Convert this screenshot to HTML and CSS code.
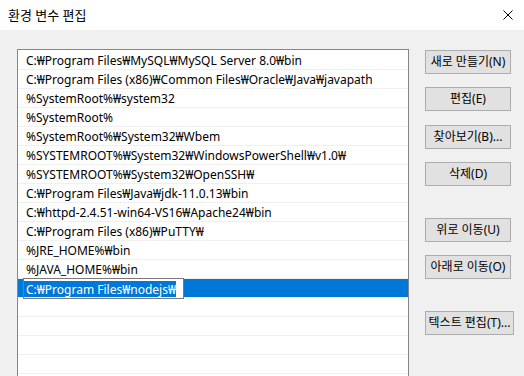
FILE: index.html
```html
<!DOCTYPE html>
<html lang="ko">
<head>
    <meta charset="UTF-8">
    <title>환경 변수 편집</title>
    <link rel="stylesheet" href="styles.css">
</head>
<body>
    <div class="dialog">
        <div class="title-bar">
            <span class="title">환경 변수 편집</span>
            <svg class="close" width="10" height="10" viewBox="0 0 10 10">
                <path d="M0.5 0.5 L9.5 9.5 M9.5 0.5 L0.5 9.5" stroke="#000" stroke-width="1" fill="none"/>
            </svg>
        </div>

        <div class="content">
            <ul class="path-list">
                <li>C:₩Program Files₩MySQL₩MySQL Server 8.0₩bin</li>
                <li>C:₩Program Files (x86)₩Common Files₩Oracle₩Java₩javapath</li>
                <li>%SystemRoot%₩system32</li>
                <li>%SystemRoot%</li>
                <li>%SystemRoot%₩System32₩Wbem</li>
                <li>%SYSTEMROOT%₩System32₩WindowsPowerShell₩v1.0₩</li>
                <li>%SYSTEMROOT%₩System32₩OpenSSH₩</li>
                <li>C:₩Program Files₩Java₩jdk-11.0.13₩bin</li>
                <li>C:₩httpd-2.4.51-win64-VS16₩Apache24₩bin</li>
                <li>C:₩Program Files (x86)₩PuTTY₩</li>
                <li>%JRE_HOME%₩bin</li>
                <li>%JAVA_HOME%₩bin</li>
                <li class="selected">
                    <div class="edit-box"><span class="highlight">C:₩Program Files₩nodejs₩</span></div>
                </li>
                <li></li>
                <li></li>
                <li></li>
                <li></li>
            </ul>

            <div class="buttons">
                <button>새로 만들기(N)</button>
                <button>편집(E)</button>
                <button class="nudge">찾아보기(B)...</button>
                <button>삭제(D)</button>
                <button class="spaced">위로 이동(U)</button>
                <button>아래로 이동(O)</button>
                <button class="spaced wide">텍스트 편집(T)...</button>
            </div>
        </div>
    </div>
</body>
</html>
```

FILE: styles.css
```css
body {
    margin: 0;
    width: 524px;
    height: 376px;
    overflow: hidden;
    font-family: "Noto Sans", "Noto Sans CJK KR", sans-serif;
    font-size: 12px;
    color: #000;
    background: #f0f0f0;
}
.dialog {
    display: flex;
    flex-direction: column;
    height: 376px;
    overflow: hidden;
}
.title-bar {
    flex-shrink: 0;
    height: 30px;
    background: #fff;
    display: flex;
    align-items: center;
    justify-content: space-between;
    padding: 0 11px 1px 8px;
    box-sizing: border-box;
}
.title {
    font-size: 13px;
    line-height: 16px;
}
.close {
    display: block;
}
.content {
    flex: 1;
    min-height: 0;
    overflow: hidden;
    display: flex;
    gap: 16px;
    padding: 19px 0 0 17px;
}
.path-list {
    flex-shrink: 0;
    list-style: none;
    margin: 0;
    padding: 1px 0 0 0;
    width: 390px;
    height: 340px;
    background: #fff;
    border: 1px solid #828790;
}
.path-list li {
    height: 18px;
    line-height: 19px;
    padding: 0 0 0 8px;
    border-bottom: 1px solid #f0f0f0;
    white-space: nowrap;
    position: relative;
}
.path-list li.selected {
    background: #0078d7;
}
.edit-box {
    position: absolute;
    left: 5px;
    top: -1px;
    width: 159px;
    height: 18px;
    border: 1px solid #7a7a7a;
    background: #fff;
    padding: 1px 0 0 0;
    overflow: hidden;
}
.highlight {
    display: inline-block;
    height: 16px;
    line-height: 17px;
    padding: 0 0 0 2px;
    background: #0078d7;
    color: #fff;
}
.buttons {
    display: flex;
    flex-direction: column;
    gap: 13px;
    padding-top: 1px;
}
button {
    flex-shrink: 0;
    width: 86px;
    height: 24px;
    padding: 0;
    font-family: "Noto Sans", "Noto Sans CJK KR", sans-serif;
    font-size: 12px;
    line-height: 16px;
    color: #000;
    background: #e1e1e1;
    border: 1px solid #adadad;
    white-space: nowrap;
    overflow: visible;
}
button.nudge {
    margin-top: 1px;
}
button.spaced {
    margin-top: 19px;
}
button.wide {
    width: 89px;
}
```
